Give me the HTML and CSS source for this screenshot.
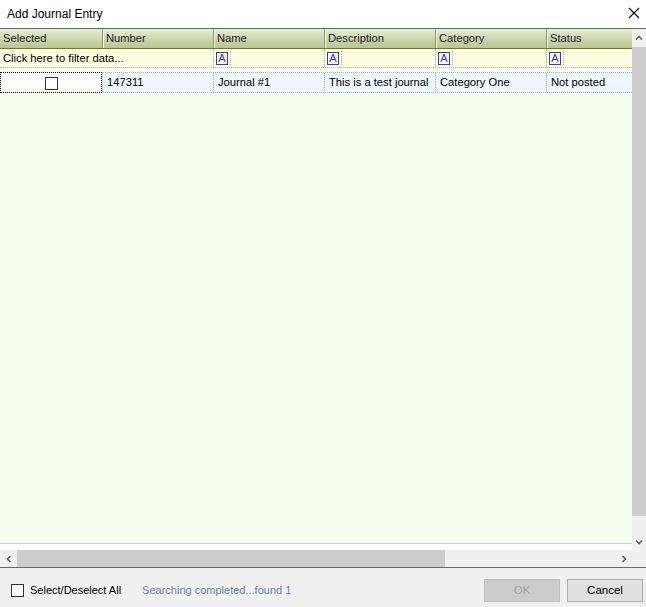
FILE: index.html
```html
<!DOCTYPE html>
<html>
<head>
<meta charset="utf-8">
<link rel="stylesheet" href="styles.css">
</head>
<body>
<div class="window">
  <div class="titlebar">
    <span class="title">Add Journal Entry</span>
    <svg class="close" width="12" height="12" viewBox="0 0 12 12"><path d="M1 1 L11 11 M11 1 L1 11" stroke="#000" stroke-width="1.1" fill="none"/></svg>
  </div>
  <div class="main">
    <div class="grid">
      <div class="header row">
        <div class="hc c1">Selected</div>
        <div class="hc cn">Number</div>
        <div class="hc cn">Name</div>
        <div class="hc cn">Description</div>
        <div class="hc cn">Category</div>
        <div class="hc cn clast">Status</div>
      </div>
      <div class="filter row">
        <div class="fc fwide">Click here to filter data...</div>
        <div class="fc cn"><span class="ficon">A</span></div>
        <div class="fc cn"><span class="ficon">A</span></div>
        <div class="fc cn"><span class="ficon">A</span></div>
        <div class="fc cn clast"><span class="ficon">A</span></div>
      </div>
      <div class="gap"></div>
      <div class="data row">
        <div class="dc c1 focus"><span class="cb"></span></div>
        <div class="dc cn">147311</div>
        <div class="dc cn">Journal #1</div>
        <div class="dc cn">This is a test journal</div>
        <div class="dc cn">Category One</div>
        <div class="dc cn clast">Not posted</div>
      </div>
      <div class="fill"></div>
      <div class="whitestrip"></div>
      <div class="hscroll">
        <div class="sbtn"><svg width="8" height="8" viewBox="0 0 8 8"><path d="M5.5 1 L2.5 4 L5.5 7" stroke="#606060" stroke-width="1.6" fill="none"/></svg></div>
        <div class="hthumb"></div>
        <div class="htrack"></div>
        <div class="sbtn"><svg width="8" height="8" viewBox="0 0 8 8"><path d="M2.5 1 L5.5 4 L2.5 7" stroke="#606060" stroke-width="1.6" fill="none"/></svg></div>
      </div>
    </div>
    <div class="vscroll">
      <div class="vbtn up"><svg width="8" height="8" viewBox="0 0 8 8"><path d="M1 5.5 L4 2.5 L7 5.5" stroke="#606060" stroke-width="1.6" fill="none"/></svg></div>
      <div class="vthumb"></div>
      <div class="vtrack"></div>
      <div class="vbtn down"><svg width="8" height="8" viewBox="0 0 8 8"><path d="M1 2.5 L4 5.5 L7 2.5" stroke="#606060" stroke-width="1.6" fill="none"/></svg></div>
      <div class="corner"></div>
    </div>
  </div>
  <div class="footer">
    <span class="fcb"></span>
    <span class="flabel">Select/Deselect All</span>
    <span class="status">Searching completed...found 1</span>
    <div class="buttons">
      <div class="btn disabled">OK</div>
      <div class="btn">Cancel</div>
    </div>
  </div>
</div>
</body>
</html>
```
FILE: styles.css
```css
html, body {
  margin: 0;
  padding: 0;
  background: #f0f0f0;
}
.window {
  width: 646px;
  height: 607px;
  display: flex;
  flex-direction: column;
  font-family: "Liberation Sans", Arial, sans-serif;
  font-size: 11.2px;
  color: #000;
  overflow: hidden;
}
.titlebar {
  height: 28px;
  background: #fff;
  border-bottom: 1px solid #646464;
  display: flex;
  align-items: center;
  justify-content: space-between;
  padding-left: 7px;
  padding-right: 6px;
}
.title {
  font-size: 12px;
  color: #000;
  margin-top: -1px;
}
.close {
  margin-top: -2px;
}
.main {
  height: 538px;
  display: flex;
}
.grid {
  width: 632px;
  display: flex;
  flex-direction: column;
  background: #f7fff1;
}
.row {
  display: flex;
  box-sizing: border-box;
}
.c1 { width: 102px; flex: none; }
.cn { width: 111px; flex: none; }
.clast { width: 86px; }
.header {
  height: 20px;
  background: linear-gradient(#e6efd5, #c7d3a7 60%, #b8c593);
  border-bottom: 1px solid #6b7a2c;
}
.hc {
  box-sizing: border-box;
  padding-left: 3px;
  line-height: 19px;
  color: #1e1a1e;
  white-space: nowrap;
  overflow: hidden;
}
.hc.cn {
  border-left: 1px solid #8b9b55;
  box-shadow: inset 1px 0 0 #f1f6e4;
  padding-left: 3px;
}
.filter {
  height: 19px;
  background: #fffee0;
  border-bottom: 1px dotted #a8b6c8;
}
.fc {
  box-sizing: border-box;
  line-height: 18px;
  white-space: nowrap;
  overflow: hidden;
}
.fwide {
  width: 213px;
  flex: none;
  padding-left: 3px;
}
.fc.cn {
  border-left: 1px dotted #a8b6c8;
  padding-left: 2px;
  display: flex;
  align-items: center;
}
.ficon {
  box-sizing: border-box;
  width: 12px;
  height: 13px;
  border: 1px solid #3c3ca0;
  background: #f4f4ff;
  color: #3a3ab4;
  font-size: 11px;
  line-height: 11px;
  text-align: center;
  margin-right: 2px;
}
.fc.cn::after {
  content: "";
  width: 0;
  height: 14px;
  border-left: 1px dotted #a8b6c8;
}
.gap {
  height: 4px;
}
.data {
  height: 21px;
  background: #eef6fe;
  border-top: 1px dotted #a8b6c8;
  border-bottom: 1px dotted #a8b6c8;
}
.dc {
  box-sizing: border-box;
  line-height: 18px;
  padding-left: 4px;
  white-space: nowrap;
  overflow: hidden;
}
.dc.cn {
  border-left: 1px dotted #a8b6c8;
}
.focus {
  background: #fff;
  outline: 1px dotted #000;
  outline-offset: -1px;
  margin-top: -1px;
  height: 21px;
  display: flex;
  align-items: center;
  justify-content: center;
  padding-left: 0;
}
.cb {
  width: 13px;
  height: 13px;
  box-sizing: border-box;
  border: 1px solid #333;
  background: #fff;
  margin-top: 1px;
}
.fill {
  height: 450px;
  border-bottom: 1px solid #c8ced4;
}
.whitestrip {
  height: 6px;
  background: #fff;
}
.hscroll {
  height: 17px;
  display: flex;
  background: #f0f0f0;
}
.sbtn {
  width: 17px;
  display: flex;
  align-items: center;
  justify-content: center;
}
.hthumb {
  width: 428px;
  background: #cdcdcd;
}
.htrack {
  flex: 1;
}
.vscroll {
  width: 14px;
  display: flex;
  flex-direction: column;
  background: #f0f0f0;
}
.vbtn {
  height: 18px;
  display: flex;
  align-items: center;
  justify-content: center;
}
.vbtn.down {
  height: 17px;
}
.vthumb {
  height: 469px;
  background: #cdcdcd;
}
.vtrack {
  flex: 1;
}
.corner {
  height: 17px;
}
.footer {
  flex: 1;
  border-top: 1px solid #696969;
  display: flex;
  align-items: flex-start;
  padding: 11px 3px 0 11px;
}
.fcb {
  width: 13px;
  height: 13px;
  box-sizing: border-box;
  border: 1px solid #333;
  background: #fff;
  margin-top: 5px;
}
.flabel {
  margin-left: 6px;
  line-height: 23px;
  font-size: 11px;
}
.status {
  margin-left: 21px;
  color: #6d7fa3;
  line-height: 23px;
  font-size: 11px;
}
.buttons {
  margin-left: auto;
  display: flex;
  gap: 7px;
}
.btn {
  box-sizing: border-box;
  width: 76px;
  height: 23px;
  border: 1px solid #adadad;
  background: #e1e1e1;
  text-align: center;
  line-height: 21px;
  font-size: 11.5px;
}
.btn.disabled {
  border-color: #bfbfbf;
  background: #cccccc;
  color: #a0a0a0;
}
```
